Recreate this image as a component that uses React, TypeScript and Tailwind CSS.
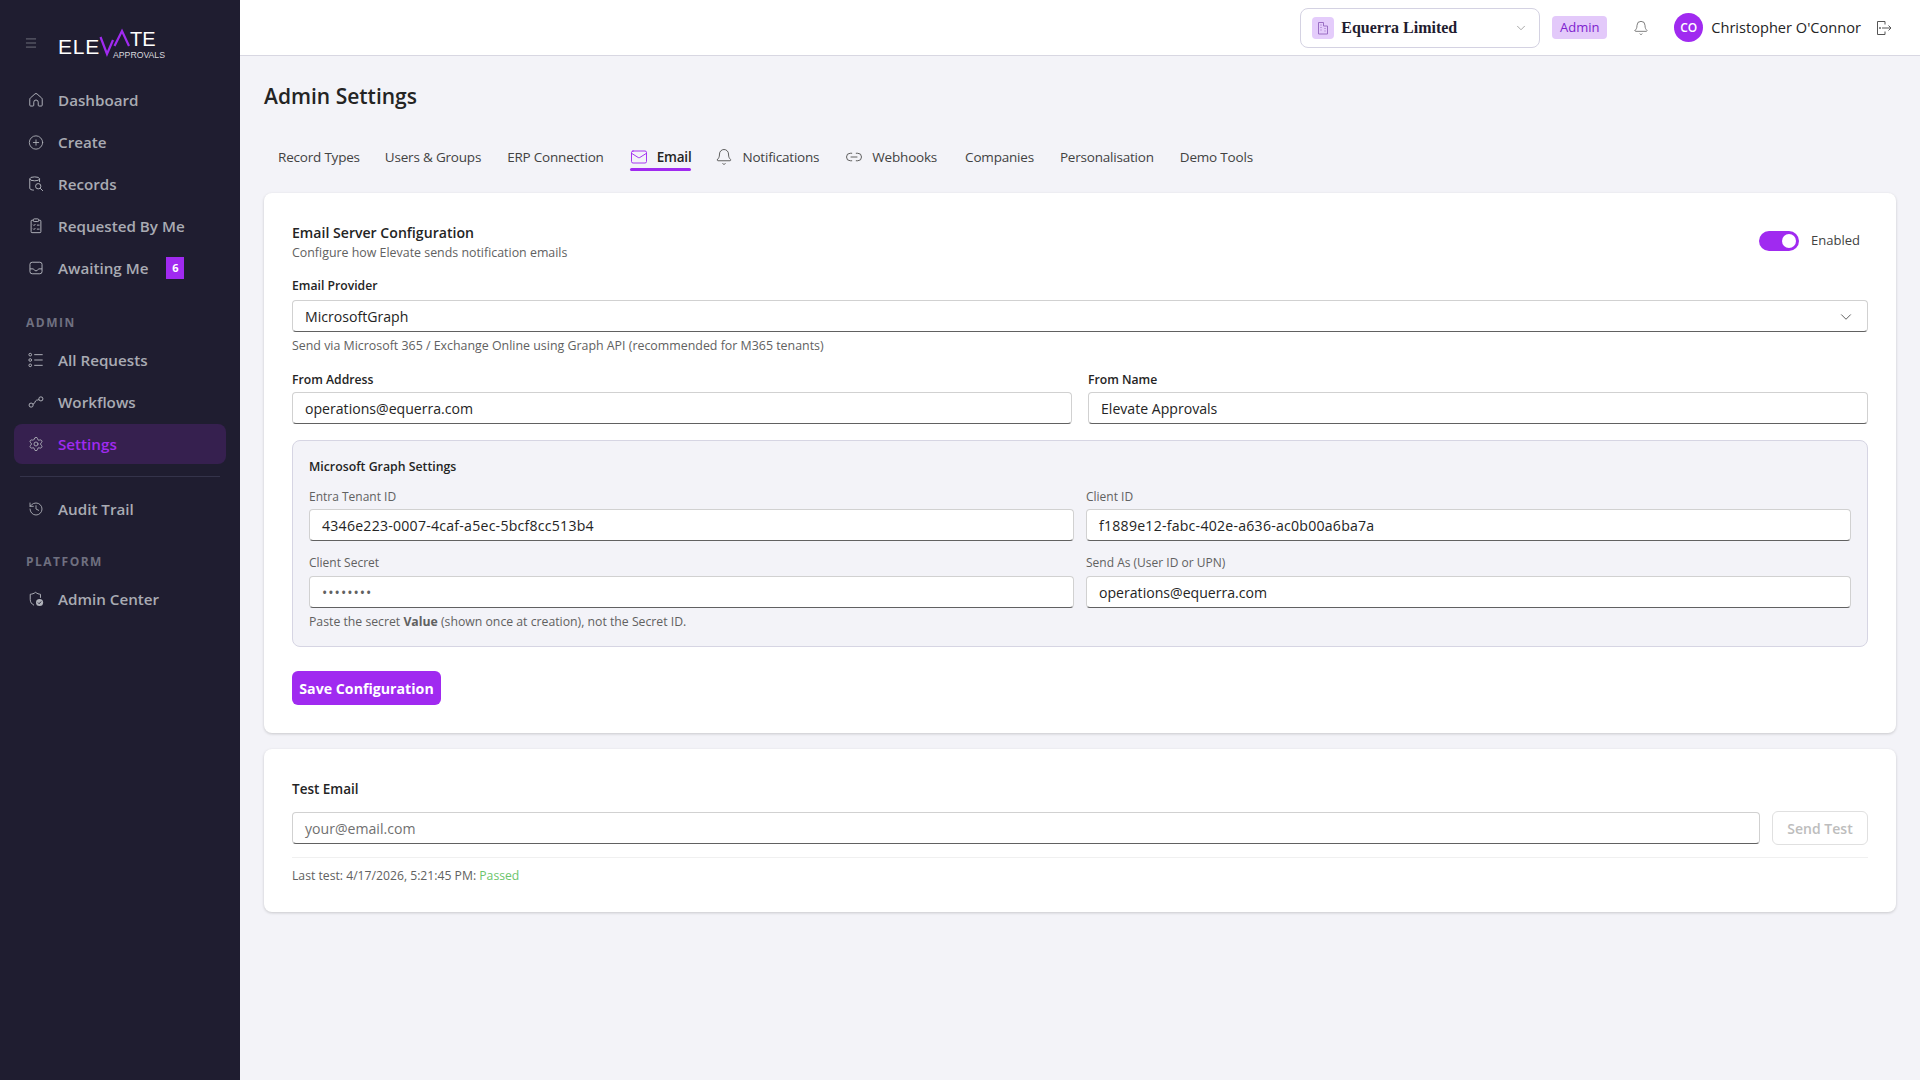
import React from 'react';
import { CirclePlus, Settings, History, Bell, Mail, Link2, ChevronDown, Menu } from 'lucide-react';

const stroke = 1.3;

// Sidebar icons drawn by hand, lucide has nothing close for these
const HomeIcon = () => (
  <svg width="18" height="18" viewBox="0 0 18 18" fill="none" stroke="currentColor" strokeWidth="1.1">
    <path d="M7.800 2.200a1.800 1.800 0 0 1 2.400 0l5.200 4.600c.4.300.6.800.6 1.300v6.700a1 1 0 0 1-1 1h-2.500a1 1 0 0 1-1-1v-3.300a2.500 2.500 0 0 0-5 0v3.300a1 1 0 0 1-1 1H3a1 1 0 0 1-1-1V8.100c0-.5.200-1 .6-1.300z" />
  </svg>
);

const RecordsIcon = () => (
  <svg width="18" height="18" viewBox="0 0 18 18" fill="none" stroke="currentColor" strokeWidth="1.1">
    <ellipse cx="7.500" cy="3.200" rx="5.500" ry="2.200" />
    <path d="M2 3.200v10.600c0 1.200 2 2 4.600 2.100M13 3.200v3.600" />
    <circle cx="11.500" cy="11.500" r="3" />
    <path d="M13.700 13.700 16.800 16.800" />
  </svg>
);

const RequestedIcon = () => (
  <svg width="18" height="18" viewBox="0 0 18 18" fill="none" stroke="currentColor" strokeWidth="1.100">
    <path d="M6 2.500H4.500a1 1 0 0 0-1 1v12a1 1 0 0 0 1 1h9a1 1 0 0 0 1-1v-12a1 1 0 0 0-1-1H12" />
    <rect x="6" y="1" width="6" height="3" rx="1" />
    <path d="m5.800 7.500 1 1 1.500-1.700M10 8h3M5.800 12l1 1 1.500-1.700M10 12.500h3" />
  </svg>
);

const InboxIcon = () => (
  <svg width="18" height="18" viewBox="0 0 18 18" fill="none" stroke="currentColor" strokeWidth="1.100">
    <rect x="2.200" y="2.500" width="13.600" height="13" rx="2.500" />
    <path d="M2.200 10h3.500c.6 0 .9.300 1.100.8.300.8 1.100 1.400 2.200 1.400s1.900-.6 2.200-1.400c.2-.5.500-.8 1.100-.8h3.500" />
  </svg>
);

const ListIcon = () => (
  <svg width="18" height="18" viewBox="0 0 18 18" fill="none" stroke="currentColor" strokeWidth="1.100">
    <circle cx="2.500" cy="3" r="1.500" />
    <circle cx="2.500" cy="9" r="1.500" />
    <circle cx="2.500" cy="15" r="1.500" />
    <path d="M7 3h9.500M7 9h9.500M7 15h9.500" />
  </svg>
);

const WorkflowIcon = () => (
  <svg width="18" height="18" viewBox="0 0 18 18" fill="none" stroke="currentColor" strokeWidth="1.100">
    <circle cx="3.500" cy="12.500" r="2.300" />
    <circle cx="14.500" cy="5.500" r="2.300" />
    <path d="M5.500 11.500c2.500-.3 2.200-4 4-4.500 1-.3 2-.1 2.800-.7" />
  </svg>
);

const AdminCenterIcon = () => (
  <svg width="18" height="18" viewBox="0 0 18 18" fill="none" stroke="currentColor" strokeWidth="1.100">
    <path d="M8.500 1.500c1.800 1.400 3.600 2 5.500 2.200v4M6.800 16C4 14.600 2.500 12.400 2.500 9.500V3.700c2-.2 4.200-.8 6-2.200" />
    <circle cx="13" cy="13" r="4" fill="currentColor" stroke="none" />
    <path d="m11.200 13 1.300 1.300 2.300-2.500" stroke="#1f1d30" />
  </svg>
);

const BuildingIcon = () => (
  <svg width="12" height="14" viewBox="0 0 12 14" fill="none" stroke="#9a6fc4" strokeWidth="1">
    <path d="M1.500 13V1.500h5V5h4v8z" />
    <path d="M3.500 4h1M3.500 6.500h1M3.500 9h1M7.500 7.500h1M7.500 10h1" />
  </svg>
);

const SignOutIcon = () => (
  <svg width="16" height="16" viewBox="0 0 16 16" fill="none" stroke="#555" strokeWidth="1">
    <path d="M9 4.500V1.500H1.500v13H9v-3" />
    <path d="M6 8h9M12.500 5.500 15 8l-2.500 2.500" />
    <circle cx="4" cy="8" r="0.500" fill="#555" />
  </svg>
);

const navItems = [
  { label: 'Dashboard', icon: <HomeIcon /> },
  { label: 'Create', icon: <CirclePlus size={19} strokeWidth={stroke} /> },
  { label: 'Records', icon: <RecordsIcon /> },
  { label: 'Requested By Me', icon: <RequestedIcon /> },
];

const NavRow = ({ label, icon, badge, active }: { label: string; icon: React.ReactNode; badge?: string; active?: boolean }) => (
  <div className={`mb-[2px] flex h-[40px] items-center rounded-lg px-[14px] ${active ? 'bg-[#36204f]' : ''}`}>
    <span className="flex w-[16px] justify-center text-[#b0b2ba]">{icon}</span>
    <span className={`ml-[14px] text-[15.200px] font-semibold ${active ? 'text-[#a02af0]' : 'text-[#a9abb3]'}`}>{label}</span>
    {badge && (
      <span className="ml-[18px] flex h-[22px] w-[18px] items-center justify-center bg-[#a02af0] text-[11px] font-bold text-white">
        {badge}
      </span>
    )}
  </div>
);

const Logo = () => (
  <svg width="112" height="34" viewBox="0 0 112 34" className="ml-[20px] shrink-0">
    <text x="0" y="26" fontFamily="Liberation Sans, sans-serif" fontSize="21" fill="#fff" letterSpacing="0.8">ELE</text>
    <path d="M42.500 9 49 26 55 12" fill="none" stroke="#a02af0" strokeWidth="2.200" />
    <path d="M56.500 18 64 3 71 18" fill="none" stroke="#a02af0" strokeWidth="2.200" />
    <text x="72" y="18" fontFamily="Liberation Sans, sans-serif" fontSize="20" fill="#fff">TE</text>
    <text x="55" y="30" fontFamily="Liberation Sans, sans-serif" fontSize="8.700" fill="#d8d8de">APPROVALS</text>
  </svg>
);

const Sidebar = () => (
  <aside className="flex h-full w-[240px] shrink-0 flex-col bg-[#1f1d30]">
    <div className="flex h-[80px] items-start pt-[28px] pl-[24px]">
      <Menu size={14} strokeWidth={1.25} className="mt-[8px] text-[#8b8c96]" />
      <Logo />
    </div>
    <nav className="px-[14px]">
      {navItems.map((n) => (
        <NavRow key={n.label} {...n} />
      ))}
      <div className="mt-px">
        <NavRow label="Awaiting Me" icon={<InboxIcon />} badge="6" />
      </div>
      <div className="mt-[26px] mb-[8px] h-[18px] px-[12px] text-[12px] leading-[18px] font-bold tracking-[1.500px] text-[#6f7080]">ADMIN</div>
      <NavRow label="All Requests" icon={<ListIcon />} />
      <NavRow label="Workflows" icon={<WorkflowIcon />} />
      <NavRow label="Settings" icon={<Settings size={18} strokeWidth={stroke} />} active />
      <div className="mx-[6px] mt-[12px] mb-[12px] h-px bg-[#34334a]" />
      <NavRow label="Audit Trail" icon={<History size={18} strokeWidth={stroke} />} />
      <div className="mt-[24px] mb-[8px] h-[18px] px-[12px] text-[12px] leading-[18px] font-bold tracking-[1.500px] text-[#6f7080]">PLATFORM</div>
      <NavRow label="Admin Center" icon={<AdminCenterIcon />} />
    </nav>
  </aside>
);

const TopBar = () => (
  <header className="flex h-[56px] shrink-0 items-center justify-end border-b border-[#d8d7e2] bg-white pr-[28px]">
    <div className="flex h-[40px] w-[240px] items-center rounded-lg border border-[#d4d2e2] px-[11px]">
      <span className="flex h-[22px] w-[22px] items-center justify-center rounded bg-[#e4ccfb]">
        <BuildingIcon />
      </span>
      <span className="ml-[7px] flex-1 font-['Liberation_Serif',serif] text-[16px] font-bold text-[#1f1d30]">Equerra Limited</span>
      <ChevronDown size={14} strokeWidth={1.25} className="text-[#888]" />
    </div>
    <span className="ml-[12px] flex h-[23px] w-[55px] items-center justify-center rounded bg-[#e3c9fa] text-[13px] text-[#7e22ce]">Admin</span>
    <Bell size={16} strokeWidth={1.25} className="ml-[26px] text-[#666]" />
    <span className="ml-[25px] flex h-[29px] w-[29px] items-center justify-center rounded-full bg-[#a02af0] text-[12px] font-semibold text-white">CO</span>
    <span className="ml-[8px] text-[14.600px] text-[#242424]">Christopher O'Connor</span>
    <span className="ml-[15px]"><SignOutIcon /></span>
  </header>
);

const tabs = [
  { label: 'Record Types', cls: '' },
  { label: 'Users & Groups', cls: '-ml-px' },
  { label: 'ERP Connection', cls: '' },
  { label: 'Email', icon: <Mail size={18} strokeWidth={1.25} className="text-[#a02af0]" />, active: true, cls: 'gap-[8px]' },
  { label: 'Notifications', icon: <Bell size={18} strokeWidth={1.25} className="-ml-[2px] text-[#555]" />, cls: '' },
  { label: 'Webhooks', icon: <Link2 size={18} strokeWidth={1.25} className="text-[#555]" />, cls: 'mr-[2px]' },
  { label: 'Companies', cls: '' },
  { label: 'Personalisation', cls: '' },
  { label: 'Demo Tools', cls: '' },
];

const Tabs = () => (
  <div className="mt-[29px] flex h-[32px] items-center gap-[26px] pl-[14px]">
    {tabs.map((t) => (
      <div key={t.label} className={`relative flex h-[32px] items-center gap-[9px] ${t.cls}`}>
        {t.icon}
        <span className={`text-[13.500px] tracking-[-0.200px] ${t.active ? 'font-semibold text-[#242424]' : 'text-[#424242]'}`}>{t.label}</span>
        {t.active && <span className="absolute right-0 bottom-[2px] left-0 h-[3px] rounded-full bg-[#a02af0]" />}
      </div>
    ))}
  </div>
);

const Field = ({ value, placeholder, spaced, secret }: { value?: string; placeholder?: boolean; spaced?: boolean; secret?: boolean }) => (
  <div
    className={`flex h-[32px] items-center rounded border border-[#d1d1d1] border-b-[#616161] bg-white px-[12px] pt-px text-[14.100px] ${placeholder ? 'text-[#707070]' : 'text-[#242424]'} ${spaced ? 'tracking-[0.240px]' : ''} ${secret ? 'tracking-[1px] text-[#616161]' : ''}`}
  >
    {value}
  </div>
);

const Card = ({ children, className }: { children: React.ReactNode; className?: string }) => (
  <section className={`rounded-lg bg-white px-[28px] pt-[28px] pb-[28px] shadow-[0_1px_3px_rgba(0,0,0,0.18)] ${className ?? ''}`}>{children}</section>
);

const ServerCard = () => (
  <Card className="mt-[20px]">
    <div className="flex items-start justify-between">
      <div>
        <div className="pt-px text-[14.100px] leading-[22px] font-semibold text-[#242424]">Email Server Configuration</div>
        <div className="pt-px text-[12.400px] leading-[16px] text-[#616161]">Configure how Elevate sends notification emails</div>
      </div>
      <div className="mt-[10px] mr-[8px] flex items-center">
        <span className="flex h-[20px] w-[40px] items-center justify-end rounded-full bg-[#a02af0] pr-[3px]">
          <span className="h-[14px] w-[14px] rounded-full bg-white" />
        </span>
        <span className="ml-[12px] text-[13px] text-[#424242]">Enabled</span>
      </div>
    </div>
    <div className="mt-[16px] text-[12.200px] leading-[18px] font-semibold text-[#242424]">Email Provider</div>
    <div className="mt-[5px] flex h-[32px] items-center justify-between rounded border border-[#d1d1d1] border-b-[#616161] bg-white px-[12px] pt-px text-[14.100px] text-[#242424]">
      MicrosoftGraph
      <ChevronDown size={18} strokeWidth={1.25} className="text-[#555]" />
    </div>
    <div className="mt-[6px] text-[12.400px] leading-[16px] text-[#616161]">
      Send via Microsoft 365 / Exchange Online using Graph API (recommended for M365 tenants)
    </div>
    <div className="mt-[17px] grid grid-cols-2 gap-x-[16px]">
      <div>
        <div className="text-[12.200px] leading-[18px] font-semibold text-[#242424]">From Address</div>
        <div className="mt-[3px]"><Field value="operations@equerra.com" /></div>
      </div>
      <div>
        <div className="text-[12.200px] leading-[18px] font-semibold text-[#242424]">From Name</div>
        <div className="mt-[3px]"><Field value="Elevate Approvals" /></div>
      </div>
    </div>
    <div className="mt-[16px] rounded-lg border border-[#d6d5e3] bg-[#f3f3f8] px-[16px] pt-[17px] pb-[16px]">
      <div className="text-[12.300px] leading-[18px] font-semibold text-[#242424]">Microsoft Graph Settings</div>
      <div className="mt-[13px] grid grid-cols-2 gap-x-[12px]">
        <div>
          <div className="text-[12px] leading-[16px] text-[#616161]">Entra Tenant ID</div>
          <div className="mt-[4px]"><Field value="4346e223-0007-4caf-a5ec-5bcf8cc513b4" spaced /></div>
        </div>
        <div>
          <div className="text-[12px] leading-[16px] text-[#616161]">Client ID</div>
          <div className="mt-[4px]"><Field value="f1889e12-fabc-402e-a636-ac0b00a6ba7a" spaced /></div>
        </div>
        <div className="mt-[14px]">
          <div className="text-[12px] leading-[16px] text-[#616161]">Client Secret</div>
          <div className="mt-[5px]"><Field value="••••••••" secret /></div>
        </div>
        <div className="mt-[14px]">
          <div className="text-[12px] leading-[16px] text-[#616161]">Send As (User ID or UPN)</div>
          <div className="mt-[5px]"><Field value="operations@equerra.com" /></div>
        </div>
      </div>
      <div className="mt-[5px] pt-px text-[12.250px] leading-[16px] text-[#616161]">
        Paste the secret <strong className="font-bold">Value</strong> (shown once at creation), not the Secret ID.
      </div>
    </div>
    <button className="mt-[24px] flex h-[34px] w-[149px] items-center justify-center rounded-md bg-[#a02af0] pt-px text-[14.200px] font-bold text-white">
      Save Configuration
    </button>
  </Card>
);

const TestCard = () => (
  <Card className="mt-[16px]">
    <div className="pt-px text-[13.500px] leading-[22px] font-semibold text-[#242424]">Test Email</div>
    <div className="mt-[11px] flex items-center gap-[12px]">
      <div className="flex-1"><Field value="your@email.com" placeholder /></div>
      <button className="h-[34px] w-[96px] rounded-md border border-[#e0e0e0] text-[14px] font-semibold text-[#bdbdbd]">Send Test</button>
    </div>
    <div className="mt-[12px] h-px bg-[#f0f0f0]" />
    <div className="mt-[10px] text-[12.200px] leading-[16px] text-[#616161]">
      Last test: 4/17/2026, 5:21:45 PM: <span className="text-[#6cc56c]">Passed</span>
    </div>
  </Card>
);

export default function App() {
  return (
    <div className="flex h-screen w-full overflow-hidden bg-[#f3f3f8] font-['Open_Sans','Noto_Sans',sans-serif]">
      <Sidebar />
      <div className="flex min-w-0 flex-1 flex-col">
        <TopBar />
        <main className="flex-1 px-[24px] pt-[24px]">
          <h1 className="text-[21px] leading-[32px] font-semibold text-[#242424]">Admin Settings</h1>
          <Tabs />
          <ServerCard />
          <TestCard />
        </main>
      </div>
    </div>
  );
}
